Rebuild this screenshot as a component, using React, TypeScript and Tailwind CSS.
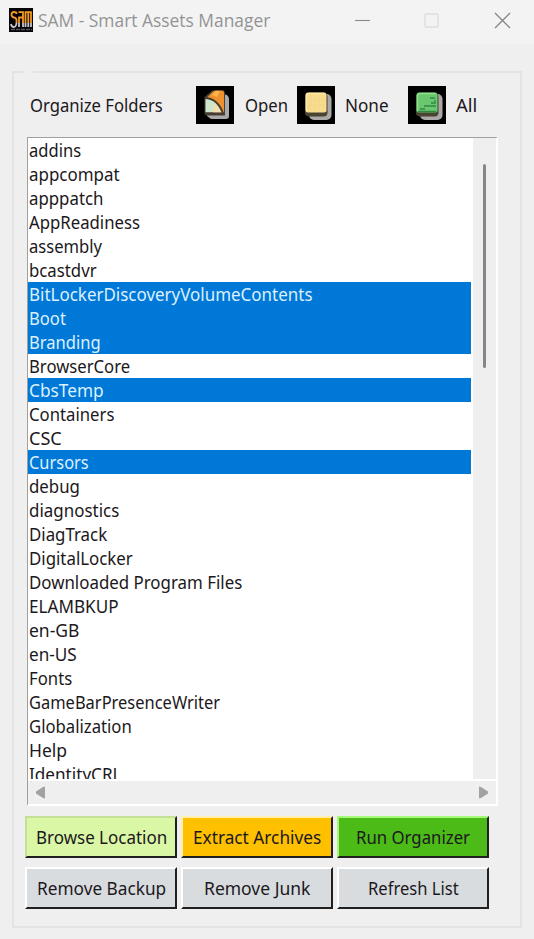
import React, { useLayoutEffect, useRef, useState } from "react";

type Item = { name: string; width: number; selected?: boolean };

const folders: Item[] = [
  { name: "addins", width: 52 },
  { name: "appcompat", width: 91 },
  { name: "apppatch", width: 74 },
  { name: "AppReadiness", width: 111 },
  { name: "assembly", width: 73 },
  { name: "bcastdvr", width: 68 },
  { name: "BitLockerDiscoveryVolumeContents", width: 284, selected: true },
  { name: "Boot", width: 37, selected: true },
  { name: "Branding", width: 72, selected: true },
  { name: "BrowserCore", width: 101 },
  { name: "CbsTemp", width: 75, selected: true },
  { name: "Containers", width: 85 },
  { name: "CSC", width: 33 },
  { name: "Cursors", width: 60, selected: true },
  { name: "debug", width: 51 },
  { name: "diagnostics", width: 90 },
  { name: "DiagTrack", width: 78 },
  { name: "DigitalLocker", width: 104 },
  { name: "Downloaded Program Files", width: 213 },
  { name: "ELAMBKUP", width: 90 },
  { name: "en-GB", width: 50 },
  { name: "en-US", width: 48 },
  { name: "Fonts", width: 43 },
  { name: "GameBarPresenceWriter", width: 191 },
  { name: "Globalization", width: 103 },
  { name: "Help", width: 38 },
  { name: "IdentityCRL", width: 93 },
];

const buttons = [
  { label: "Browse Location", width: 131, tone: "bg-[#d9f7a4] border-t-[#c5df98] border-l-[#c5df98]" },
  { label: "Extract Archives", width: 128, tone: "bg-[#ffc000] border-t-[#fff0b0] border-l-[#fff0b0]" },
  { label: "Run Organizer", width: 114, tone: "bg-[#4cbb17] border-t-[#a5f878] border-l-[#a5f878]" },
  { label: "Remove Backup", width: 129, tone: "bg-[#d8dcdf] border-t-white border-l-white" },
  { label: "Remove Junk", width: 106, tone: "bg-[#d8dcdf] border-t-white border-l-white" },
  { label: "Refresh List", width: 91, tone: "bg-[#d8dcdf] border-t-white border-l-white" },
];

/* Condenses or widens a line of text so that it takes up a given width. */
function Label({ text, width }: { text: string; width: number }) {
  const ref = useRef<HTMLSpanElement>(null);
  const [scale, setScale] = useState(1);
  useLayoutEffect(() => {
    const fit = () => {
      if (ref.current?.offsetWidth) setScale(width / ref.current.offsetWidth);
    };
    fit();
    document.fonts?.ready.then(fit);
  }, [text, width]);
  return (
    <span className="inline-block whitespace-nowrap text-left" style={{ width }}>
      <span ref={ref} className="inline-block origin-left" style={{ transform: `scaleX(${scale})` }}>
        {text}
      </span>
    </span>
  );
}

function SamIcon() {
  return (
    <svg width="24" height="24" viewBox="0 0 24 24" className="shrink-0">
      <path fill="#050308" d="M0 0h24v24H0z" />
      <g fill="none" strokeWidth="1.8">
        <path stroke="#f39a20" d="M7.500 6V5.500Q7.500 4 5 4T2.500 6.500t2.500 3T7.500 12v3M9.500 4.200h4.500V15M10 15V9.500h4M16.500 15V4.200H22V15M19.300 4v11" />
        <path stroke="#c8c8cc" d="M2 16q.5 3 2.800 3t2.700-4M10 15v4M14 15v4M16.500 15v4M19.300 15v4M22 15v4" />
      </g>
      <path stroke="#55555c" strokeWidth="1.500" strokeDasharray="4 1" d="M2 21.500h21" />
    </svg>
  );
}

function TileIcon({ kind }: { kind: "open" | "none" | "all" }) {
  return (
    <svg width="38" height="38" viewBox="0 0 38 38" className="shrink-0">
      <path fill="#000" d="M0 0h38v38H0z" />
      {kind === "open" ? (
        <>
          <path fill="#a9a9ab" d="M14 8h14q5 1 5 5v17q0 3-3 3H15l-4-3z" />
          <path fill="#4b4037" d="M8.500 11l8-6.500h10q2.500 0 2.500 3V29.500H11q-2.500 0-2.500-3z" />
          <path fill="#ef922c" d="M10.500 12l6-6q1-1.500 3-1.500H26q2 0 2 2V27H18z" />
          <path fill="#ffb44d" d="M16 9l4-4h4l-3 6z" />
          <path fill="#cce6cc" d="M9.500 12q11 1 16 14.500H9.500z" />
          <path fill="#f3dfad" d="M17 17q5 4 8 9.500h-8z" />
          <path fill="none" stroke="#443a30" strokeWidth="1.800" d="M9 12q12 0 18 15M9 27.500h19" />
        </>
      ) : (
        <>
          <rect x="12" y="8" width="22.500" height="26" rx="5" fill="#aaa9a7" />
          <rect x="8" y="7" width="22.500" height="23.500" rx="4" fill="#494332" />
          <rect x="8.500" y="6.500" width="21" height="20" rx="2.500" fill={kind === "none" ? "#f8dc8d" : "#69c76e"} />
          <path fill="none" stroke={kind === "none" ? "#ffe9a6" : "#8ee18d"} strokeWidth="1.300" d="M9.500 25V10q0-2.500 3-2.500h15" />
          {kind === "none" ? (
            <path stroke="#f0d184" strokeWidth=".5" d="M14 9v16M18 9v16M22 9v16M26 9v16M11 14h17M11 19h17" />
          ) : (
            <path fill="none" stroke="#328744" strokeWidth="1.300" d="M22 12h5M27 14v3h-4M16 20h12M12 23h5M10 25.500h18" />
          )}
        </>
      )}
    </svg>
  );
}

export default function App() {
  return (
    <main className="flex h-[939px] w-[534px] flex-col overflow-hidden bg-[#efefef] font-['Noto_Sans','Open_Sans',sans-serif] text-[17.5px] text-[#1c1820]">
      <header className="flex h-11 shrink-0 items-center bg-[#f3f3f3] pl-[9px] pr-[23px]">
        <div className="-mt-1 flex flex-1 items-center gap-[5px]">
          <SamIcon />
          <span className="font-['Open_Sans',sans-serif] text-[18px] text-[#939393]">
            <Label text="SAM - Smart Assets Manager" width={232} />
          </span>
        </div>
        <svg width="157" height="17" viewBox="0 0 157 17" fill="none" className="-mt-1">
          <path d="M1 8.500h15" stroke="#898989" strokeWidth="1.100" />
          <rect x="71" y="2" width="13" height="13" rx="1" stroke="#dddddd" strokeWidth="1.400" />
          <path d="M141 1l15 15M156 1l-15 15" stroke="#858585" strokeWidth="1.300" />
        </svg>
      </header>

      <section className="ml-3 mt-[27px] h-[857px] w-[510px] shrink-0 border-2 border-t-0 border-[#e3e3e3]">
        <div className="-mx-0.5 flex h-0.5 gap-[9px]">
          <span className="w-3 bg-[#e3e3e3]" />
          <span className="flex-1 bg-[#e3e3e3]" />
        </div>
        <div className="flex h-16 items-center pl-4">
          <span className="w-[166px]"><Label text="Organize Folders" width={133} /></span>
          <TileIcon kind="open" />
          <span className="w-[63px] pl-[11px]"><Label text="Open" width={43} /></span>
          <TileIcon kind="none" />
          <span className="w-[73px] pl-[10px]"><Label text="None" width={44} /></span>
          <TileIcon kind="all" />
          <span className="pl-[10px]"><Label text="All" width={21} /></span>
        </div>

        <div className="ml-[13px] h-[669px] w-[471px] border-b-2 border-l border-r-2 border-t border-b-white border-l-[#a0a0a0] border-r-white border-t-[#a0a0a0]">
          <div className="flex h-[641px]">
            <div className="w-[445px] overflow-hidden bg-white pr-[2px]">
              {folders.map(({ name, width, selected }) => (
                <div
                  key={name}
                  className={`h-6 pl-px leading-6 ${selected ? "bg-[#0078d7] text-[#dcf0ff]" : ""}`}
                >
                  <Label text={name} width={width} />
                </div>
              ))}
            </div>
            <div className="flex flex-1 justify-center pt-[26px]">
              <div className="h-[204px] w-[3px] rounded-full bg-[#878787]" />
            </div>
          </div>
          <div className="flex h-[25px] items-center justify-between border-t-2 border-white px-[7px]">
            <svg width="11" height="13" viewBox="0 0 11 13"><path fill="#a2a2a2" d="M10 .5v12L8 12 1 7.500v-2L8 1z" /></svg>
            <svg width="11" height="13" viewBox="0 0 11 13"><path fill="#a2a2a2" d="M1 .5v12L3 12l7-4.500v-2L3 1z" /></svg>
          </div>
        </div>

        <div className="ml-[11px] mt-[10px] grid w-[464px] grid-cols-3 gap-x-1 gap-y-[9px]">
          {buttons.map(({ label, width, tone }) => (
            <button
              key={label}
              className={`flex h-[42px] items-center justify-center border-2 border-b-[#202020] border-r-[#202020] ${tone}`}
            >
              <Label text={label} width={width} />
            </button>
          ))}
        </div>
      </section>
    </main>
  );
}
